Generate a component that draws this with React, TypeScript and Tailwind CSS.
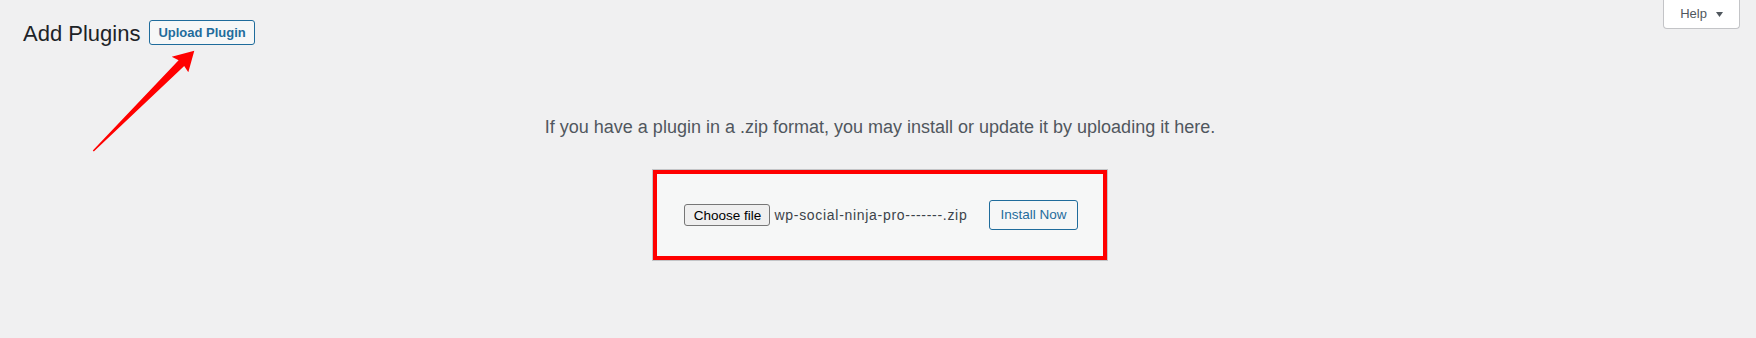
function UploadArrow() {
  return (
    <svg
      className="pointer-events-none absolute left-0 top-0"
      width="210"
      height="170"
      viewBox="0 0 210 170"
      aria-hidden="true"
    >
      <polygon
        points="92.8,150.5 178.6,60.3 171.7,56.7 194.3,50.7 188.3,72.3 184.2,65.9 93.8,151.5"
        fill="#ff0000"
      />
    </svg>
  );
}

function FakeFileInput() {
  return (
    <div className="flex w-[305px] items-center">
      <button className="h-[22px] w-[86px] rounded-[3px] border border-[#767676] bg-[#efefef] text-[13.5px] leading-none text-black">
        Choose file
      </button>
      <span className="ml-[4px] text-[14px] tracking-[0.7px] text-[#3c434a]">
        wp-social-ninja-pro-------.zip
      </span>
    </div>
  );
}

export default function App() {
  return (
    <main className="relative min-h-screen bg-[#f0f0f1] font-['Liberation_Sans',Arial,sans-serif]">
      <div className="flex items-start justify-between">
        <div className="flex items-start gap-[9px] pl-[23px] pt-[20px]">
          <h1 className="mt-[3px] text-[22px] font-normal leading-[22px] text-[#1d2327]">Add Plugins</h1>
          <a
            href="#"
            className="flex h-[25px] items-center rounded-[3px] border border-[#1f6c9c] bg-[#f6f7f7] px-2 text-[13px] font-bold text-[#1f6c9c]"
          >
            Upload Plugin
          </a>
        </div>
        <button className="mr-4 flex h-[29px] w-[77px] items-center justify-center gap-[9px] rounded-b-[4px] border border-t-0 border-[#c3c4c7] bg-white text-[13px] text-[#50575e]">
          Help
          <svg width="7" height="5" viewBox="0 0 7 5" aria-hidden="true">
            <polygon points="0,0 7,0 3.5,5" fill="#50575e" />
          </svg>
        </button>
      </div>

      <section className="pl-[22px] pr-[18px]">
        <p className="mt-[71px] text-center text-[18px] leading-[1.3] text-[#50575e]">
          If you have a plugin in a .zip format, you may install or update it by uploading it here.
        </p>

        <div className="mt-[30px] flex justify-center">
          <form className="relative flex items-center border border-[#c3c4c7] bg-[#f6f7f7] py-[30px] pl-[31px] pr-[29px]">
            <FakeFileInput />
            <button
              type="button"
              className="h-[30px] rounded-[3px] border border-[#1f6c9c] bg-[#f6f7f7] px-[10px] text-[13.5px] text-[#1f6c9c]"
            >
              Install Now
            </button>
            <div className="pointer-events-none absolute inset-0 border-4 border-[#ff0000]" />
          </form>
        </div>
      </section>

      <UploadArrow />
    </main>
  );
}
